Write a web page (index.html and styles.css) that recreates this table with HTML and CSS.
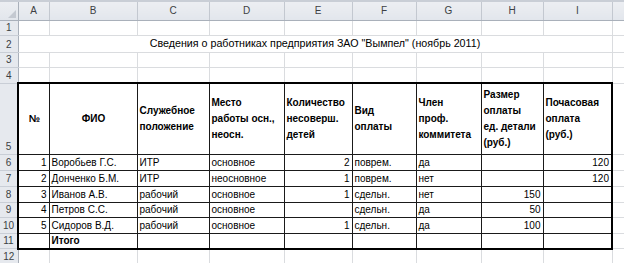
FILE: index.html
```html
<!DOCTYPE html>
<html lang="ru">
<head>
<meta charset="utf-8">
<title>Сведения о работниках</title>
<link rel="stylesheet" href="styles.css">
</head>
<body>
<table class="sheet">
  <colgroup>
    <col class="w-rh"><col class="w-a"><col class="w-b"><col class="w-c"><col class="w-d"><col class="w-e"><col class="w-f"><col class="w-g"><col class="w-h"><col class="w-i"><col class="w-j">
  </colgroup>
  <tr class="h-hdr">
    <th class="corner"><span class="tri"></span></th><th class="ch">A</th><th class="ch">B</th><th class="ch">C</th><th class="ch">D</th><th class="ch">E</th><th class="ch">F</th><th class="ch">G</th><th class="ch">H</th><th class="ch">I</th><th class="ch"></th>
  </tr>
  <tr class="h-15"><th class="rh">1</th><td></td><td></td><td></td><td></td><td></td><td></td><td></td><td></td><td></td><td></td></tr>
  <tr class="h-17"><th class="rh">2</th><td colspan="9" class="title">Сведения о работниках предприятия ЗАО "Вымпел" (ноябрь 2011)</td><td></td></tr>
  <tr class="h-15"><th class="rh">3</th><td></td><td></td><td></td><td></td><td></td><td></td><td></td><td></td><td></td><td></td></tr>
  <tr class="h-16"><th class="rh">4</th><td></td><td></td><td></td><td></td><td></td><td></td><td></td><td></td><td></td><td></td></tr>
  <tr class="h-71 head">
    <th class="rh">5</th>
    <td class="b t l ctr">№</td>
    <td class="b t ctr">ФИО</td>
    <td class="b t">Служебное<br>положение</td>
    <td class="b t">Место<br>работы осн.,<br>неосн.</td>
    <td class="b t">Количество<br>несоверш.<br>детей</td>
    <td class="b t">Вид<br>оплаты</td>
    <td class="b t">Член<br>проф.<br>коммитета</td>
    <td class="b t">Размер<br>оплаты<br>ед. детали<br>(руб.)</td>
    <td class="b t r">Почасовая<br>оплата<br>(руб.)</td>
    <td></td>
  </tr>
  <tr class="h-16"><th class="rh">6</th><td class="b l num">1</td><td class="b">Воробьев Г.С.</td><td class="b">ИТР</td><td class="b">основное</td><td class="b num">2</td><td class="b">поврем.</td><td class="b">да</td><td class="b num"></td><td class="b r num">120</td><td></td></tr>
  <tr class="h-16"><th class="rh">7</th><td class="b l num">2</td><td class="b">Донченко Б.М.</td><td class="b">ИТР</td><td class="b">неосновное</td><td class="b num">1</td><td class="b">поврем.</td><td class="b">нет</td><td class="b num"></td><td class="b r num">120</td><td></td></tr>
  <tr class="h-16"><th class="rh">8</th><td class="b l num">3</td><td class="b">Иванов А.В.</td><td class="b">рабочий</td><td class="b">основное</td><td class="b num">1</td><td class="b">сдельн.</td><td class="b">нет</td><td class="b num">150</td><td class="b r num"></td><td></td></tr>
  <tr class="h-15"><th class="rh">9</th><td class="b l num">4</td><td class="b">Петров С.С.</td><td class="b">рабочий</td><td class="b">основное</td><td class="b num"></td><td class="b">сдельн.</td><td class="b">да</td><td class="b num">50</td><td class="b r num"></td><td></td></tr>
  <tr class="h-16"><th class="rh">10</th><td class="b l num">5</td><td class="b">Сидоров В.Д.</td><td class="b">рабочий</td><td class="b">основное</td><td class="b num">1</td><td class="b">сдельн.</td><td class="b">да</td><td class="b num">100</td><td class="b r num"></td><td></td></tr>
  <tr class="h-15"><th class="rh">11</th><td class="b l bt"></td><td class="b bt bold">Итого</td><td class="b bt"></td><td class="b bt"></td><td class="b bt"></td><td class="b bt"></td><td class="b bt"></td><td class="b bt"></td><td class="b r bt"></td><td></td></tr>
  <tr class="h-16"><th class="rh">12</th><td></td><td></td><td></td><td></td><td></td><td></td><td></td><td></td><td></td><td></td></tr>
</table>
</body>
</html>
```

FILE: styles.css
```css
html, body {
  margin: 0;
  padding: 0;
  background: #ffffff;
  overflow: hidden;
}

.sheet {
  border-collapse: collapse;
  table-layout: fixed;
  width: 624px;
  font-family: "Liberation Sans", Arial, sans-serif;
  font-size: 10px;
  color: #000;
}

.w-rh { width: 18px; }
.w-a { width: 31px; }
.w-b { width: 88px; }
.w-c { width: 72px; }
.w-d { width: 75px; }
.w-e { width: 68px; }
.w-f { width: 64px; }
.w-g { width: 65px; }
.w-h { width: 62px; }
.w-i { width: 69px; }
.w-j { width: 12px; }

.h-hdr { height: 19px; }
.h-15 { height: 15px; }
.h-16 { height: 16px; }
.h-17 { height: 17px; }
.h-71 { height: 71px; }

td {
  border: 1px solid #dadcdf;
  padding: 0 2px 1px 2px;
  vertical-align: bottom;
  line-height: 13px;
  white-space: nowrap;
  overflow: hidden;
}

th {
  font-weight: normal;
  color: #3c3f44;
  background: #e6e9ee;
  padding: 0;
  line-height: 13px;
  font-size: 10px;
}

.ch {
  border-top: 2px solid #c9ced6;
  border-right: 1px solid #c3c8d0;
  border-bottom: 1px solid #a9b0ba;
  text-align: center;
  vertical-align: middle;
  background: linear-gradient(#eceef2, #e2e6ec);
}

.corner {
  border-top: 2px solid #c9ced6;
  border-right: 1px solid #a9b0ba;
  border-bottom: 1px solid #a9b0ba;
  background: linear-gradient(#eceef2, #e2e6ec);
  position: relative;
}

.tri {
  position: absolute;
  right: 2px;
  bottom: 2px;
  width: 0;
  height: 0;
  border-left: 8px solid transparent;
  border-bottom: 8px solid #c4c9d1;
}

.rh {
  border-right: 1px solid #a9b0ba;
  border-bottom: 1px solid #c9ced6;
  text-align: center;
  vertical-align: bottom;
  padding-bottom: 1px;
}

.title {
  text-align: center;
  border-left-color: #dadcdf;
  border-right-color: #dadcdf;
  font-size: 10.7px;
  padding-bottom: 2px;
}

.b { border: 1px solid #1a1a1a; }
.t { border-top: 2px solid #000; }
.l { border-left: 2px solid #000; }
.r { border-right: 2px solid #000; }
.bt { border-bottom: 2px solid #000; }

.num { text-align: right; }
.ctr { text-align: center; }
.bold { font-weight: bold; }

.head td.b {
  font-weight: bold;
  white-space: nowrap;
  vertical-align: middle;
  line-height: 16px;
  padding: 0 1px 0 2px;
  font-size: 10px;
}
```
